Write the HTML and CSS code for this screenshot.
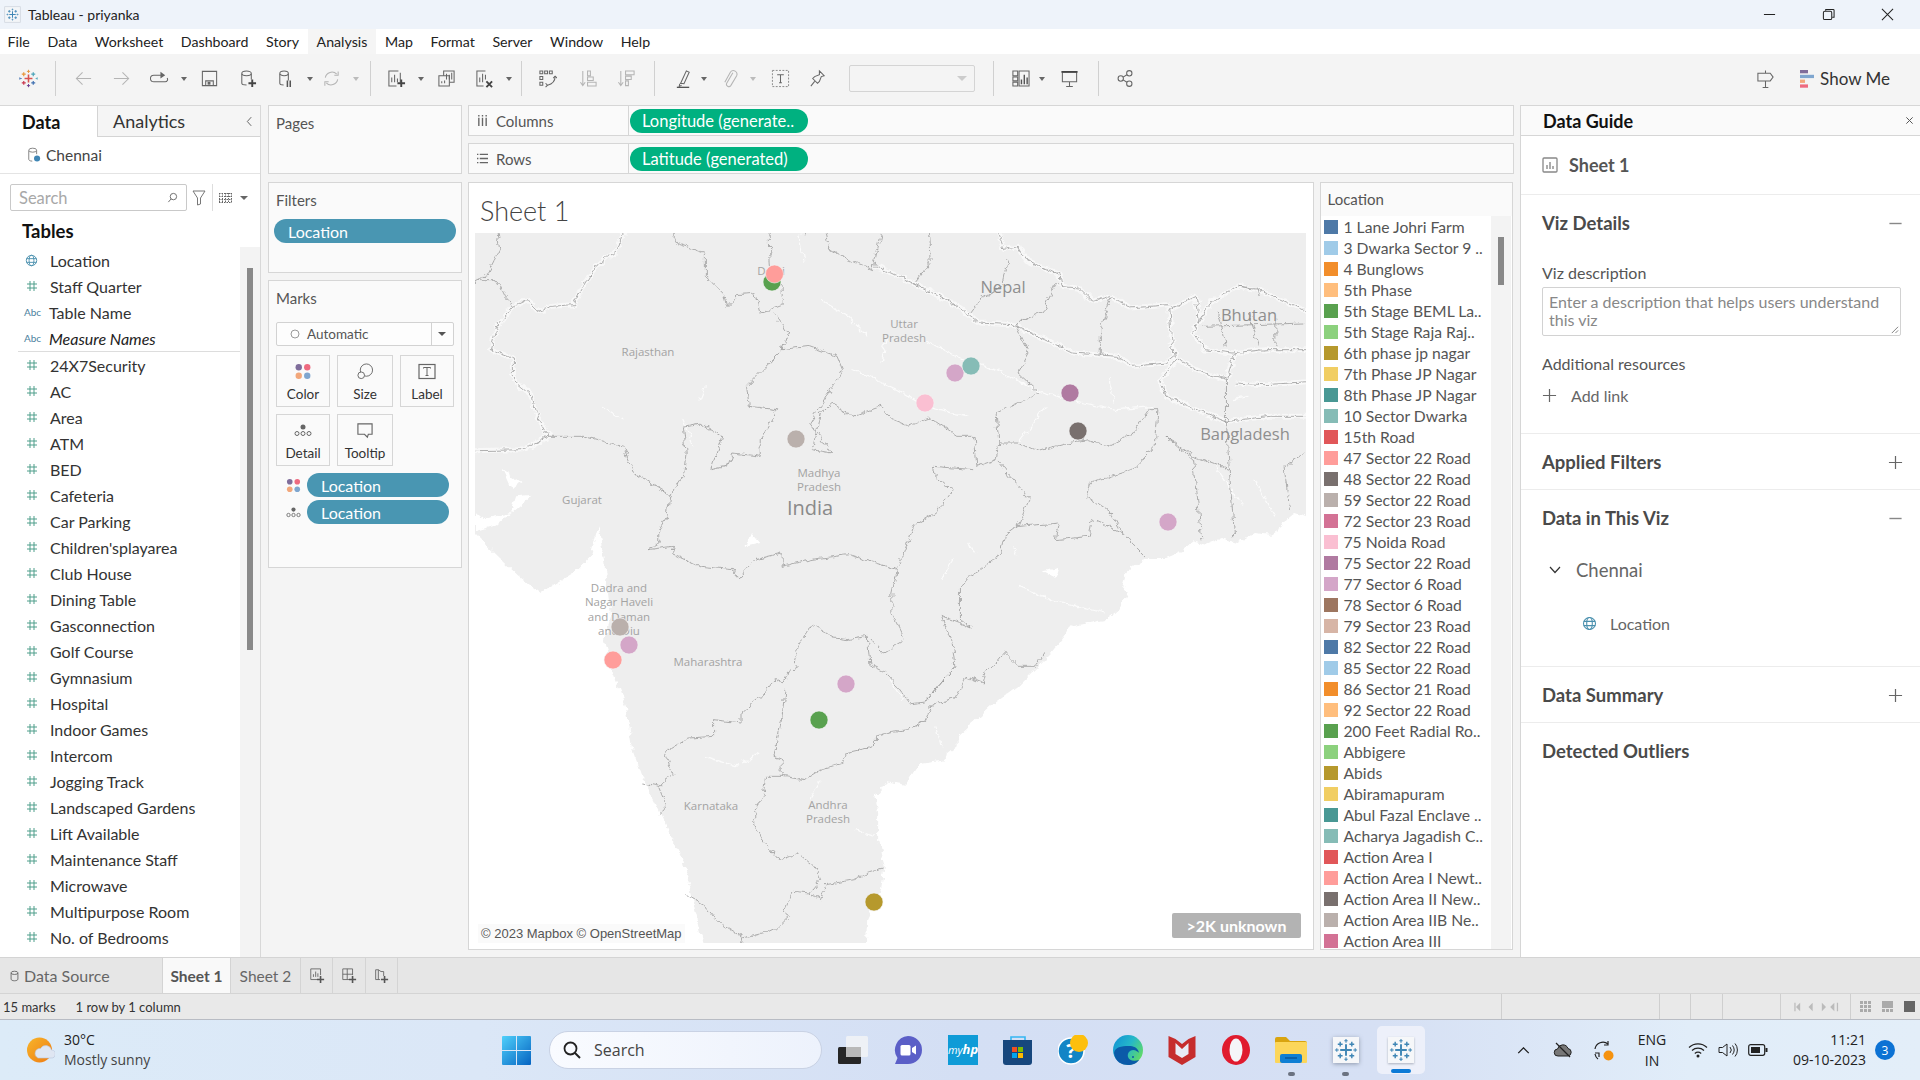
FILE: index.html
```html
<!DOCTYPE html>
<html lang="en">
<head>
<meta charset="utf-8">
<title>Tableau - priyanka</title>
<link rel="stylesheet" href="styles.css">
</head>
<body>
<svg class="sprites" aria-hidden="true">
  <symbol id="hash" viewBox="0 0 12 12"><path d="M4 1v10M8 1v10M1 4h10M1 8h10" fill="none" stroke="#4e9e8b" stroke-width="1"/></symbol>
  <symbol id="globe" viewBox="0 0 14 14"><g fill="none" stroke="#4a90ae" stroke-width="1"><circle cx="7" cy="7" r="5.6"/><ellipse cx="7" cy="7" rx="2.6" ry="5.6"/><path d="M1.6 5h10.8M1.6 9h10.8"/></g></symbol>
  <symbol id="tab" viewBox="0 0 24 24"><g fill="none" stroke="#3f86b5"><path d="M12 6v12M6 12h12" stroke-width="2"/><path d="M6 3.500v5M3.500 6h5M18 3.500v5M15.500 6h5M6 15.500v5M3.500 18h5M18 15.500v5M15.500 18h5" stroke-width="1.500"/><path d="M12 .5v4M10.300 2.500h3.400M12 19.500v4M10.300 21.500h3.400M2.500 10.300v3.400M.5 12h4M21.500 10.300v3.400M19.500 12h4" stroke-width="1.100"/></g></symbol>
  <symbol id="dots4" viewBox="0 0 16 16"><circle cx="4" cy="4" r="3" fill="#7f6d9b"/><circle cx="12" cy="4" r="3" fill="#ee6a80"/><circle cx="4" cy="12" r="3" fill="#f2a77b"/><circle cx="12" cy="12" r="3" fill="#7fa6cf"/></symbol>
  <symbol id="detail" viewBox="0 0 18 14"><circle cx="9" cy="3.500" r="2.500" fill="#666"/><g fill="none" stroke="#666"><circle cx="3" cy="10" r="2"/><circle cx="9" cy="10" r="2"/><circle cx="15" cy="10" r="2"/></g></symbol>
  <symbol id="plus" viewBox="0 0 16 16"><path d="M8 1v14M1 8h14" stroke="#666" stroke-width="1.300" fill="none"/></symbol>
  <symbol id="minus" viewBox="0 0 16 16"><path d="M1.500 8h13" stroke="#888" stroke-width="1.500" fill="none"/></symbol>
</svg>

<header class="titlebar">
  <svg class="title-icon" viewBox="0 0 24 24"><rect x="1" y="1" width="22" height="22" fill="#f3f5f8" stroke="#cdd3dc"/><use href="#tab" x="3" y="3" width="18" height="18"/></svg>
  <span class="title-text">Tableau - priyanka</span>
  <div class="win-ctrl">
    <svg viewBox="0 0 14 14"><path d="M1 7h12" stroke="#222" stroke-width="1.100"/></svg>
    <svg viewBox="0 0 14 14"><g fill="none" stroke="#222" stroke-width="1.100"><rect x="1.500" y="3.500" width="9" height="9" rx="1.500"/><path d="M4 3V1.500h8a1 1 0 0 1 1 1V10h-2"/></g></svg>
    <svg viewBox="0 0 14 14"><path d="M1 1l12 12M13 1L1 13" stroke="#222" stroke-width="1.100"/></svg>
  </div>
</header>

<nav class="menubar">
  <span class="menu">File</span><span class="menu">Data</span><span class="menu">Worksheet</span><span class="menu">Dashboard</span><span class="menu">Story</span><span class="menu hot">Analysis</span><span class="menu">Map</span><span class="menu">Format</span><span class="menu">Server</span><span class="menu">Window</span><span class="menu">Help</span>
</nav>

<div class="toolbar">
  <span class="btn"><svg viewBox="0 0 24 24"><g fill="none"><path d="M12 7v10M7 12h10" stroke="#d9534f" stroke-width="2"/><path d="M6 4v5M3.500 6.500h5" stroke="#e8973c" stroke-width="1.500"/><path d="M18 4v5M15.500 6.500h5" stroke="#4aa3b8" stroke-width="1.500"/><path d="M6 15v5M3.500 17.500h5" stroke="#c9384f" stroke-width="1.500"/><path d="M18 15v5M15.500 17.500h5" stroke="#3f6fb0" stroke-width="1.500"/><path d="M12 1v4M10 3h4" stroke="#e8973c" stroke-width="1.200"/><path d="M12 19v4M10 21h4" stroke="#6a3d8f" stroke-width="1.200"/><path d="M1 10.500v3M1 12h2.500" stroke="#3f6fb0" stroke-width="1"/><path d="M23 10.500v3M21 12h2" stroke="#4aa3b8" stroke-width="1"/></g></svg></span>
  <i class="sep"></i>
  <span class="btn off"><svg viewBox="0 0 20 20"><path d="M18 10H3M9 3.500L2.500 10 9 16.500" class="ln"/></svg></span>
  <span class="btn off"><svg viewBox="0 0 20 20"><path d="M2 10h15M11 3.500l6.500 6.500-6.500 6.500" class="ln"/></svg></span>
  <span class="btn"><svg viewBox="0 0 20 20"><path d="M13 6.500H4a2.500 2.500 0 0 0 0 7h12a2.500 2.500 0 0 0 2-4" class="ln"/><path d="M11 3l5 3.500-5 3.500z" fill="#666"/></svg></span>
  <span class="car"></span>
  <span class="btn"><svg viewBox="0 0 20 20"><path d="M2.500 2.500h15v15h-15z" class="ln"/><path d="M6 17.500v-5h8v5" class="ln"/><rect x="8" y="13.500" width="3" height="3" fill="#666"/></svg></span>
  <span class="btn"><svg viewBox="0 0 20 20"><path d="M4 5v10c0 1 1.500 1.800 5 1.800M14 5v6" class="ln"/><ellipse cx="9" cy="4.500" rx="5" ry="2.500" class="ln"/><path d="M15 11v8M11 15h8" stroke="#444" stroke-width="2"/></svg></span>
  <span class="btn"><svg viewBox="0 0 20 20"><path d="M4 5v10c0 1 1.500 1.800 4 1.800M13 5v7" class="ln"/><ellipse cx="8.500" cy="4.500" rx="4.500" ry="2.500" class="ln"/><path d="M12 12v7M15 12v7" stroke="#555" stroke-width="1.600"/></svg></span>
  <span class="car"></span>
  <span class="btn m off"><svg viewBox="0 0 20 20"><path d="M3.500 9a7 7 0 0 1 12-3.500M16.500 11a7 7 0 0 1-12 3.500" class="ln"/><path d="M13 6.500h4V2.500M7 13.500H3v4" class="ln"/></svg></span>
  <span class="car off ml-4"></span>
  <i class="sep"></i>
  <span class="btn ml-neg2"><svg viewBox="0 0 20 20"><path d="M12 2H2v16h8" class="ln"/><path d="M5 14V9M8 14V6M11 14V10M14 14V4" class="ln"/><path d="M15 11v8M11 15h8" stroke="#444" stroke-width="2"/></svg></span>
  <span class="car"></span>
  <span class="btn"><svg viewBox="0 0 20 20"><path d="M7 7V2h11v12h-5" class="ln"/><path d="M2 7h11v11H2z" class="ln"/><path d="M10 11V5M13 11V6M15.500 11V4M5 15v-2M8 15v-3" class="ln"/></svg></span>
  <span class="btn"><svg viewBox="0 0 20 20"><path d="M11 2H2v16h7" class="ln"/><path d="M5 14V9M8 14V5M11 11V6" class="ln"/><path d="M12 13l6 6M18 13l-6 6" stroke="#444" stroke-width="2"/></svg></span>
  <span class="car"></span>
  <i class="sep tight"></i>
  <span class="btn"><svg viewBox="0 0 20 20"><path d="M2 2h3v3H2zM7 2h3v3H7zM12 2h3v3h-3zM2 8h3v3H2zM2 14h3v3H2z" class="ln"/><path d="M18 8c0 5-3 8-8 9" class="ln"/><path d="M16 9.500l2-2 2 2M8 15l2 2-2 2" class="ln"/></svg></span>
  <span class="btn ml-3 off"><svg viewBox="0 0 20 20"><path d="M4 2v15M1.500 14L4 17.500 6.500 14M9 2h3v5H9zM9 8.500h6v3.500H9zM9 14h9v4H9z" class="ln"/></svg></span>
  <span class="btn off"><svg viewBox="0 0 20 20"><path d="M4 2v15M1.500 14L4 17.500 6.500 14M9 2h9v4H9zM9 7.500h6V11H9zM9 12.500h3v5H9z" class="ln"/></svg></span>
  <i class="sep mid"></i>
  <span class="btn n ml-6"><svg viewBox="0 0 20 20"><path d="M7 15L13 2l3 1.500-5.500 12zM6 15.500l-.5 3 2.500-1.500" class="ln"/><path d="M3 19.500h13" stroke="#555" stroke-width="1.800"/></svg></span>
  <span class="car ml-2"></span>
  <span class="btn m ml-5 off"><svg viewBox="0 0 20 20"><path d="M12.500 4L6 15a2.500 2.500 0 0 0 4.300 2.500L16.500 7a3.800 3.800 0 0 0-6.500-3.800L4 14" class="ln"/></svg></span>
  <span class="car off ml-2"></span>
  <span class="btn n ml-8"><svg viewBox="0 0 20 20"><rect x="1.500" y="1.500" width="17" height="17" fill="none" stroke="#888" stroke-dasharray="2 1.500"/><path d="M6.500 6h7M10 6v8.500M8.500 14.500h3" class="ln"/></svg></span>
  <span class="btn n ml-11"><svg viewBox="0 0 20 20"><path d="M12 2l5 5-3 1-2 5-2 2-5-5 2-2 5-2zM7 13l-4 5" class="ln"/></svg></span>
  <span class="combo"><span class="combo-caret"></span></span>
  <i class="sep combo-sep"></i>
  <span class="btn m ml-11"><svg viewBox="0 0 20 20"><path d="M2 2h5v5H2zM2 8.500h5v4H2zM2 14h5v4H2zM8.500 2H19v16H8.500z" class="ln"/><path d="M11 16v-5M14 16V6M17 16V9" stroke="#555" stroke-width="1.500"/></svg></span>
  <span class="car ml-1"></span>
  <span class="btn n ml-8"><svg viewBox="0 0 20 20"><path d="M2.500 3.500h15v10h-15zM10 13.500v5M6.500 18.500h7" class="ln"/><path d="M1.500 3h17" stroke="#444" stroke-width="1.800"/></svg></span>
  <i class="sep wide"></i>
  <span class="btn n ml-13"><svg viewBox="0 0 20 20"><g class="ln"><circle cx="14" cy="4.500" r="2.800"/><circle cx="5" cy="10" r="2.800"/><circle cx="14" cy="15.500" r="2.800"/><path d="M7.500 8.500l4-2.500M7.500 11.500l4 2.500"/></g></svg></span>
  <span class="tb-right">
    <svg class="sign" viewBox="0 0 20 20"><path d="M10 1v3M10 12v7M7 19h6M2 4h13l3 4-3 4H2z" class="ln"/></svg>
    <svg class="showme-ic" viewBox="0 0 14 18"><rect y="0" width="8" height="3.300" fill="#7f6d9b"/><rect y="4.800" width="14" height="3.300" fill="#7fa6cf"/><rect y="9.600" width="5" height="3.300" fill="#f2a77b"/><rect y="14.400" width="8" height="3.300" fill="#ee6a80"/></svg>
    <span class="showme">Show Me</span>
  </span>
</div>

<main class="main">
  <aside class="data-pane">
    <div class="pane-tabs">
      <span class="ptab active">Data</span>
      <span class="ptab rest">Analytics<svg class="collapse" viewBox="0 0 8 12"><path d="M6 1L1.500 6 6 11" fill="none" stroke="#555"/></svg></span>
    </div>
    <div class="source">
      <svg viewBox="0 0 16 18"><g fill="none" stroke="#777"><path d="M2 4v10c0 1 1.500 2 4 2M11 4v4"/><ellipse cx="6.500" cy="3.500" rx="4.500" ry="2.300"/></g><circle cx="11.500" cy="13" r="3.500" fill="#3f86b5"/></svg>
      <span>Chennai</span>
    </div>
    <div class="search-row">
      <div class="search"><span>Search</span><svg viewBox="0 0 12 12"><circle cx="7" cy="5" r="3.500" fill="none" stroke="#666"/><path d="M4.500 7.500L1.500 11" stroke="#666"/></svg></div>
      <svg class="filter-ic" viewBox="0 0 14 16"><path d="M1 1h12L8.500 8v6l-3 1V8z" fill="none" stroke="#777"/></svg>
      <i class="mini-sep"></i>
      <svg class="grid-ic" viewBox="0 0 13 10"><path d="M0 .5h13M0 3.500h13M0 6.500h13M0 9.500h13M.5 0v10M3.500 0v10M6.500 0v10M9.500 0v10M12.500 0v10" stroke="#666" stroke-dasharray="1.500 1" fill="none"/></svg>
      <span class="caret-dark"></span>
    </div>
    <h2 class="tables">Tables</h2>
    <div class="fields">
      <ul class="field-list">
        <li><svg class="gl" ><use href="#globe"/></svg><span>Location</span></li>
        <li><svg class="hs"><use href="#hash"/></svg><span>Staff Quarter</span></li>
        <li><em class="abc">Abc</em><span>Table Name</span></li>
        <li class="rule"><em class="abc">Abc</em><span class="it">Measure Names</span></li>
        <li><svg class="hs"><use href="#hash"/></svg><span>24X7Security</span></li>
        <li><svg class="hs"><use href="#hash"/></svg><span>AC</span></li>
        <li><svg class="hs"><use href="#hash"/></svg><span>Area</span></li>
        <li><svg class="hs"><use href="#hash"/></svg><span>ATM</span></li>
        <li><svg class="hs"><use href="#hash"/></svg><span>BED</span></li>
        <li><svg class="hs"><use href="#hash"/></svg><span>Cafeteria</span></li>
        <li><svg class="hs"><use href="#hash"/></svg><span>Car Parking</span></li>
        <li><svg class="hs"><use href="#hash"/></svg><span>Children'splayarea</span></li>
        <li><svg class="hs"><use href="#hash"/></svg><span>Club House</span></li>
        <li><svg class="hs"><use href="#hash"/></svg><span>Dining Table</span></li>
        <li><svg class="hs"><use href="#hash"/></svg><span>Gasconnection</span></li>
        <li><svg class="hs"><use href="#hash"/></svg><span>Golf Course</span></li>
        <li><svg class="hs"><use href="#hash"/></svg><span>Gymnasium</span></li>
        <li><svg class="hs"><use href="#hash"/></svg><span>Hospital</span></li>
        <li><svg class="hs"><use href="#hash"/></svg><span>Indoor Games</span></li>
        <li><svg class="hs"><use href="#hash"/></svg><span>Intercom</span></li>
        <li><svg class="hs"><use href="#hash"/></svg><span>Jogging Track</span></li>
        <li><svg class="hs"><use href="#hash"/></svg><span>Landscaped Gardens</span></li>
        <li><svg class="hs"><use href="#hash"/></svg><span>Lift Available</span></li>
        <li><svg class="hs"><use href="#hash"/></svg><span>Maintenance Staff</span></li>
        <li><svg class="hs"><use href="#hash"/></svg><span>Microwave</span></li>
        <li><svg class="hs"><use href="#hash"/></svg><span>Multipurpose Room</span></li>
        <li><svg class="hs"><use href="#hash"/></svg><span>No. of Bedrooms</span></li>
      </ul>
      <div class="track data-track"><div class="thumb data-thumb"></div></div>
    </div>
  </aside>

  <section class="cards">
    <div class="card pages"><h3>Pages</h3></div>
    <div class="card filters"><h3>Filters</h3><div class="pill blue">Location</div></div>
    <div class="card marks">
      <h3>Marks</h3>
      <div class="marktype"><svg viewBox="0 0 10 10"><circle cx="5" cy="5" r="4" fill="none" stroke="#999"/></svg><span>Automatic</span><b></b></div>
      <div class="markgrid">
        <div class="mbtn"><svg><use href="#dots4"/></svg><span>Color</span></div>
        <div class="mbtn"><svg viewBox="0 0 18 18"><g fill="none" stroke="#666"><circle cx="10.500" cy="7.500" r="6.500"/><circle cx="5" cy="13" r="3.500" fill="#fafafa"/></g></svg><span>Size</span></div>
        <div class="mbtn"><svg viewBox="0 0 18 16"><rect x="1" y="1" width="16" height="14" fill="none" stroke="#666" stroke-width="1.200"/><path d="M5.500 5V4h7v1M9 4v8M7.500 12h3" fill="none" stroke="#666"/></svg><span>Label</span></div>
        <div class="mbtn"><svg><use href="#detail"/></svg><span>Detail</span></div>
        <div class="mbtn"><svg viewBox="0 0 18 18"><path d="M1.500 2h15v11h-4l-1 3-3-3h-7z" fill="none" stroke="#666" stroke-width="1.200"/></svg><span>Tooltip</span></div>
      </div>
      <div class="encode"><svg class="enc-ic"><use href="#dots4"/></svg><div class="pill blue enc">Location</div></div>
      <div class="encode"><svg class="enc-ic"><use href="#detail"/></svg><div class="pill blue enc">Location</div></div>
    </div>
  </section>

  <section class="center">
    <div class="shelf">
      <div class="shelf-label"><svg viewBox="0 0 12 12"><path d="M2 3v9M6 3v9M10 3v9M2 0v1.500M6 0v1.500M10 0v1.500" stroke="#666" stroke-width="1.500"/></svg><span>Columns</span></div>
      <div class="pill green">Longitude (generate..</div>
    </div>
    <div class="shelf">
      <div class="shelf-label"><svg viewBox="0 0 12 12"><path d="M3 1.500h9M3 6h9M3 10.500h9M0 1.500h1.500M0 6h1.500M0 10.500h1.500" stroke="#666" stroke-width="1.500"/></svg><span>Rows</span></div>
      <div class="pill green">Latitude (generated)</div>
    </div>
    <div class="viz-row">
      <div class="sheet">
        <h1 class="sheet-title">Sheet 1</h1>
        <div class="map">
          <svg class="map-base" viewBox="10 160 1515 2130" preserveAspectRatio="none">
            <defs><filter id="rough" filterUnits="userSpaceOnUse" x="-100" y="60" width="1750" height="2350"><feTurbulence type="fractalNoise" baseFrequency="0.07 0.045" numOctaves="4" seed="7" result="n"/><feDisplacementMap in="SourceGraphic" in2="n" scale="16" xChannelSelector="R" yChannelSelector="G"/></filter></defs>
            <g filter="url(#rough)">
            <path class="land" d="M-60 90H1600V1010L1525 1010L1505 1000L1490 1020L1480 1045L1460 1065L1430 1060L1400 1090L1370 1075L1340 1095L1320 1085L1300 1115L1270 1135L1235 1135L1200 1170L1190 1220L1200 1240L1185 1290L1160 1320L1100 1340L1060 1420L1000 1520L950 1580L890 1670L890 1700L860 1740L820 1750L795 1815L760 1805L740 1850L745 1900L745 1980L757 2060L750 2130L725 2220L720 2380L440 2380L410 2180L390 2040L350 1910L320 1810L300 1720L285 1580L260 1470L245 1380L258 1310L250 1210L245 1140L235 1040L220 1130L190 1180L130 1240L90 1190L40 1110L10 1060L-60 1060Z"/>
            <path class="sea" d="M10 1055L50 1035L90 980L115 945L85 950L75 1000L30 1015L10 1000ZM60 870L95 910L75 925ZM1095 1340L1080 1390L1110 1350ZM515 1060L530 1090L505 1100ZM1045 1175L1075 1165L1070 1195Z"/>
            <g class="halo">
              <path d="M290 100L270 210L225 270L200 340L190 375L150 380L125 395L105 360L80 380L50 440L38 510L80 535L80 600L115 650L120 700L145 770L120 790L100 810L-40 815"/>
              <path d="M740 260L770 280L820 320L880 370L910 405L930 430L990 435L1050 480L1100 520L1180 530L1210 560L1270 550L1285 530L1280 480L1275 390L1325 350L1330 420L1320 460L1340 510L1390 520L1450 510L1580 510"/>
              <path d="M950 100L975 210L1000 200L1015 240L1075 285L1078 320L1110 325L1135 365L1170 350L1205 385L1275 375"/>
              <path d="M1325 440L1350 370L1400 320L1440 330L1520 390L1580 440"/>
              <path d="M1290 540L1340 580L1380 600L1395 520M1290 540L1260 600L1270 650L1340 700L1380 725L1460 710L1580 710M1395 610L1450 615L1580 600"/>
            </g>
            <g class="river">
              <path d="M640 360L690 410L725 470M830 480L890 535L960 570L1040 635L1120 670L1180 690L1250 680M760 480L750 550M700 570L780 630L830 680L910 710M430 620L420 660M240 680L280 720M1050 680L1000 790M1165 590L1175 670M600 165L610 250M390 715L410 800"/>
              <path d="M1390 660L1420 650M1430 900L1470 1010M1360 860L1410 980M910 1090L925 1120M880 1140L860 1200M990 1100L1000 1130M1000 1220L1060 1260L1160 1300"/>
              <path d="M765 1500L790 1560M640 1800L620 1860M850 1640L860 1700M700 1950L740 1970M430 1730L490 1760M495 1750L530 1720"/>
            </g>
            <g class="bd">
              <path d="M290 100L270 210L225 270L200 340L190 375L150 380L125 395L105 360L80 380L50 440L38 510L80 535L80 600L115 650L120 700L145 770L120 790L100 810L-40 815"/>
              <path d="M45 100L55 210L30 290L-20 330M20 300L50 300L65 350L80 380"/>
              <path d="M640 100L655 205L690 240L735 270L760 100M810 310L840 250L835 100M600 100L610 170"/>
              <path d="M740 260L770 280L820 320L880 370L910 405L930 430L990 435L1050 480L1100 520L1180 530L1210 560L1270 550L1285 530L1280 480L1275 390L1325 350L1330 420L1320 460L1340 510L1390 520L1450 510L1580 510"/>
              <path d="M950 100L975 210L1000 200L1015 240L1075 285L1078 320L1110 325L1135 365L1170 350L1205 385L1275 375M910 405L930 360L970 320L980 240M1070 310L1045 395L1000 430M1170 350L1150 450L1150 530"/>
              <path d="M1325 440L1350 370L1400 320L1440 330L1520 390L1580 440M1365 395L1380 500M1420 400L1440 500M1470 420L1470 500M1340 440L1520 430M1400 320L1435 325L1440 350"/>
              <path d="M545 100L548 250L550 300L570 320L570 375L530 400L520 340L490 345L470 380L465 345L430 290L430 220L375 190L375 100"/>
              <path d="M555 400L580 460L570 510L620 500L670 530L680 570L655 640L640 680L620 730L660 820L625 810L640 700L660 670L700 710L750 680L770 720L800 740L840 715L890 770L920 770L925 860L960 840L965 790L960 700L1040 640L1000 580L1020 520L995 430"/>
              <path d="M570 510L505 620L510 680L560 690L530 780L530 830L480 820L470 860L440 870L460 770L420 730L390 740L395 820L390 890L365 950L360 1010L345 1050L345 1090"/>
              <path d="M145 770L210 770L280 800L300 880L370 950"/>
              <path d="M345 1090L325 1110L370 1100L375 1125L420 1160L480 1170L490 1195L520 1140L570 1120L570 1160L620 1140L690 1125L780 1170L770 1240L770 1300L795 1380L755 1420L730 1375"/>
              <path d="M780 1170L810 1040L850 1000L880 930L845 880L845 860L920 870"/>
              <path d="M960 840L1020 960L1000 1040L975 1070L965 1130L915 1190L895 1220L895 1320L915 1345L860 1310L880 1390L885 1460L830 1570"/>
              <path d="M1000 1040L1075 1030L1070 1080L1130 1070L1135 1020L1190 1060L1235 1135"/>
              <path d="M965 790L1000 790L1035 815L1090 790L1130 780L1165 800L1210 760L1240 690L1255 690L1250 800L1210 870L1130 910L1125 950L1170 1000L1190 1060"/>
              <path d="M1290 540L1260 600L1270 650L1340 700L1380 725L1460 710L1580 710M1380 725L1385 870L1320 830L1270 770L1320 840L1335 1080M1290 540L1340 580L1380 600L1395 520M1395 610L1450 615L1580 600M1380 600L1380 725M1385 870L1395 1070M1525 820L1485 860L1495 990"/>
              <path d="M625 1335L665 1375L690 1380L725 1370L730 1455L755 1475L780 1520L805 1575L830 1570L885 1460"/>
              <path d="M625 1335L600 1400L590 1440L600 1460L580 1480L570 1510L555 1500L530 1550L495 1600L495 1630L445 1620L445 1670L400 1675L355 1720L370 1780L345 1820L315 1810"/>
              <path d="M575 1530L570 1610L555 1730L570 1740L570 1790L540 1790L535 1850L520 1890L520 1940L535 1980L565 2040L600 2020L630 2060L640 2100L620 2140L590 2135L575 2190L585 2210L560 2250L500 2275L485 2380"/>
              <path d="M345 1820L355 1860L355 1890L345 1905M395 2145L430 2180L455 2230L500 2275"/>
              <path d="M620 2140L640 2160L650 2115L700 2100L725 2080L755 2065"/>
              <path d="M570 1790L610 1800L640 1770L680 1750L685 1720L740 1700L740 1670L770 1655L800 1650L830 1625L845 1570"/>
              <path d="M975 1420L960 1450L940 1475L935 1510L905 1490L885 1555L850 1570M975 1420L1000 1460L1030 1460L1050 1420"/>
            </g>
            </g>
          </svg>
          <svg class="map-over" viewBox="0 0 831 710">
            <g class="lbl">
              <text x="173" y="123">Rajasthan</text>
              <text x="296" y="42">Delhi</text>
              <text class="big" x="528" y="60">Nepal</text>
              <text x="429" y="95">Uttar</text>
              <text x="429" y="109">Pradesh</text>
              <text class="big" x="774" y="88">Bhutan</text>
              <text class="big" x="770" y="207">Bangladesh</text>
              <text x="344" y="244">Madhya</text>
              <text x="344" y="258">Pradesh</text>
              <text class="huge" x="335" y="282">India</text>
              <text x="107" y="271">Gujarat</text>
              <text x="144" y="359">Dadra and</text>
              <text x="144" y="373">Nagar Haveli</text>
              <text x="144" y="388">and Daman</text>
              <text x="144" y="402">and Diu</text>
              <text x="233" y="433">Maharashtra</text>
              <text x="236" y="577">Karnataka</text>
              <text x="353" y="576">Andhra</text>
              <text x="353" y="590">Pradesh</text>
            </g>
            <g class="mk">
              <circle cx="297" cy="49" r="9" fill="#59a14f"/>
              <circle cx="299.500" cy="41" r="9" fill="#ff9d9a"/>
              <circle cx="480" cy="140" r="9" fill="#d4a6c8"/>
              <circle cx="496" cy="133" r="9" fill="#86bcb6"/>
              <circle cx="450" cy="170" r="9" fill="#fabfd2"/>
              <circle cx="595" cy="160" r="9" fill="#b07aa1"/>
              <circle cx="603" cy="198" r="9" fill="#79706e"/>
              <circle cx="321" cy="206" r="9" fill="#bab0ac"/>
              <circle cx="693" cy="289" r="9" fill="#d4a6c8"/>
              <circle cx="154" cy="412" r="9" fill="#d4a6c8"/>
              <circle cx="145" cy="394" r="9" fill="#bab0ac"/>
              <circle cx="138" cy="427" r="9" fill="#ff9d9a"/>
              <circle cx="371" cy="451" r="9" fill="#d4a6c8"/>
              <circle cx="344" cy="487" r="9" fill="#59a14f"/>
              <circle cx="399" cy="669" r="9" fill="#b6992d"/>
            </g>
          </svg>
          <span class="attrib">© 2023 Mapbox © OpenStreetMap</span>
          <span class="unknown">&gt;2K unknown</span>
        </div>
      </div>
      <aside class="legend">
        <h3>Location</h3>
        <div class="legend-body">
          <ul class="legend-list">
            <li><i class="c1"></i>1 Lane Johri Farm</li>
            <li><i class="c2"></i>3 Dwarka Sector 9 ..</li>
            <li><i class="c3"></i>4 Bunglows</li>
            <li><i class="c4"></i>5th Phase</li>
            <li><i class="c5"></i>5th Stage BEML La..</li>
            <li><i class="c6"></i>5th Stage Raja Raj..</li>
            <li><i class="c7"></i>6th phase jp nagar</li>
            <li><i class="c8"></i>7th Phase JP Nagar</li>
            <li><i class="c9"></i>8th Phase JP Nagar</li>
            <li><i class="c10"></i>10 Sector Dwarka</li>
            <li><i class="c11"></i>15th Road</li>
            <li><i class="c12"></i>47 Sector 22 Road</li>
            <li><i class="c13"></i>48 Sector 22 Road</li>
            <li><i class="c14"></i>59 Sector 22 Road</li>
            <li><i class="c15"></i>72 Sector 23 Road</li>
            <li><i class="c16"></i>75 Noida Road</li>
            <li><i class="c17"></i>75 Sector 22 Road</li>
            <li><i class="c18"></i>77 Sector 6 Road</li>
            <li><i class="c19"></i>78 Sector 6 Road</li>
            <li><i class="c20"></i>79 Sector 23 Road</li>
            <li><i class="c1"></i>82 Sector 22 Road</li>
            <li><i class="c2"></i>85 Sector 22 Road</li>
            <li><i class="c3"></i>86 Sector 21 Road</li>
            <li><i class="c4"></i>92 Sector 22 Road</li>
            <li><i class="c5"></i>200 Feet Radial Ro..</li>
            <li><i class="c6"></i>Abbigere</li>
            <li><i class="c7"></i>Abids</li>
            <li><i class="c8"></i>Abiramapuram</li>
            <li><i class="c9"></i>Abul Fazal Enclave ..</li>
            <li><i class="c10"></i>Acharya Jagadish C..</li>
            <li><i class="c11"></i>Action Area I</li>
            <li><i class="c12"></i>Action Area I Newt..</li>
            <li><i class="c13"></i>Action Area II New..</li>
            <li><i class="c14"></i>Action Area IIB Ne..</li>
            <li><i class="c15"></i>Action Area III</li>
          </ul>
          <div class="track legend-track"><div class="thumb legend-thumb"></div></div>
        </div>
      </aside>
    </div>
  </section>

  <aside class="guide">
    <div class="guide-head"><span>Data Guide</span><svg viewBox="0 0 10 10"><path d="M1.500 1.500l7 7M8.500 1.500l-7 7" stroke="#555" stroke-width="1.100"/></svg></div>
    <div class="guide-sheet"><svg viewBox="0 0 16 16"><rect x="1" y="1" width="14" height="14" rx="1" fill="none" stroke="#888" stroke-width="1.300"/><path d="M5 12V8M8 12V5M11 12V9" stroke="#777" stroke-width="1.200"/></svg><span>Sheet 1</span></div>
    <section class="gsec viz">
      <div class="ghead"><span>Viz Details</span><svg><use href="#minus"/></svg></div>
      <label class="glabel vd">Viz description</label>
      <div class="gtext">Enter a description that helps users understand this viz<svg viewBox="0 0 10 10"><path d="M9 2L2 9M9 6L6 9" stroke="#777"/></svg></div>
      <label class="glabel ar">Additional resources</label>
      <div class="addlink"><svg><use href="#plus"/></svg><span>Add link</span></div>
    </section>
    <section class="gsec short"><div class="ghead"><span>Applied Filters</span><svg><use href="#plus"/></svg></div></section>
    <section class="gsec dataviz">
      <div class="ghead"><span>Data in This Viz</span><svg><use href="#minus"/></svg></div>
      <div class="dsrc"><svg viewBox="0 0 12 8"><path d="M1 1l5 5.500L11 1" fill="none" stroke="#333" stroke-width="1.200"/></svg><span>Chennai</span></div>
      <div class="dfield"><svg><use href="#globe"/></svg><span>Location</span></div>
    </section>
    <section class="gsec short"><div class="ghead"><span>Data Summary</span><svg><use href="#plus"/></svg></div></section>
    <section class="gsec last"><div class="ghead"><span>Detected Outliers</span></div></section>
  </aside>
</main>

<div class="tabbar">
  <div class="tab ds"><svg viewBox="0 0 10 12"><g fill="none" stroke="#666"><ellipse cx="5" cy="2.500" rx="3.800" ry="1.800"/><path d="M1.200 2.500v7c0 1 1.700 1.800 3.800 1.800s3.800-.8 3.800-1.800v-7"/></g></svg><span>Data Source</span></div>
  <div class="tab cur">Sheet 1</div>
  <div class="tab s2">Sheet 2</div>
  <div class="tab ict"><svg viewBox="0 0 18 18"><path d="M9 13H2V1h11v7" fill="none" stroke="#666"/><path d="M5 10V7M7.500 10V4M10 10V6" stroke="#666"/><path d="M13 9v8M9 13h8" stroke="#555" stroke-width="1.800"/></svg></div>
  <div class="tab ict"><svg viewBox="0 0 18 18"><path d="M9 13H2V1h11v7M2 7h11M7 1v12" fill="none" stroke="#666"/><path d="M13 9v8M9 13h8" stroke="#555" stroke-width="1.800"/></svg></div>
  <div class="tab ict"><svg viewBox="0 0 18 18"><path d="M3 2h3l3 2h3v5M3 2v11M3 13h5M6 2v11" fill="none" stroke="#666"/><path d="M13 9v8M9 13h8" stroke="#555" stroke-width="1.800"/></svg></div>
</div>

<div class="statusbar">
  <span class="st a">15 marks</span>
  <span class="st b">1 row by 1 column</span>
  <div class="st-cells">
    <i class="cell c-a"></i><i class="cell c-b"></i><i class="cell c-c"></i><i class="cell c-d"></i>
    <div class="st-nav"><svg viewBox="0 0 54 12"><g fill="#bbb"><path d="M1 1h1.500v10H1zM8 1v10L3 6zM23 1v10l-5-5zM34 1v10l5-5zM49 1v10l-5-5zM52 1h1.500v10H52z"/></g></svg></div>
    <div class="st-view">
      <svg viewBox="0 0 11 11"><path d="M0 0h3v3H0zM4 0h3v3H4zM8 0h3v3H8zM0 4h3v3H0zM4 4h3v3H4zM8 4h3v3H8zM0 8h3v3H0zM4 8h3v3H4zM8 8h3v3H8z" fill="#aaa"/></svg>
      <svg viewBox="0 0 11 11"><path d="M0 0h11v7H0zM0 8h3v3H0zM4 8h3v3H4zM8 8h3v3H8z" fill="#aaa"/></svg>
      <svg viewBox="0 0 11 11"><path d="M0 0h11v11H0z" fill="#666"/></svg>
    </div>
  </div>
</div>

<footer class="taskbar">
  <div class="weather">
    <svg viewBox="0 0 28 26"><defs><linearGradient id="sun" x1="0" y1="0" x2="1" y2="1"><stop offset="0" stop-color="#f7b52a"/><stop offset="1" stop-color="#ef7b12"/></linearGradient></defs><circle cx="12.500" cy="13" r="12.500" fill="url(#sun)"/><path d="M11 21h13a4 4 0 0 0 .5-8 6 6 0 0 0-11-1.500A5 5 0 0 0 11 21z" fill="#dfe6f2" stroke="#b8c6dc" stroke-width=".6"/></svg>
    <div class="w-text"><div>30°C</div><div class="w2">Mostly sunny</div></div>
  </div>
  <svg class="win" viewBox="0 0 29 29"><defs><linearGradient id="wn" x1="0" y1="0" x2="1" y2="1"><stop offset="0" stop-color="#4fd0fb"/><stop offset="1" stop-color="#0563c1"/></linearGradient></defs><path d="M0 1a1 1 0 0 1 1-1h13v14H0zM15 0h13a1 1 0 0 1 1 1v13H15zM0 15h14v14H1a1 1 0 0 1-1-1zM15 15h14v13a1 1 0 0 1-1 1H15z" fill="url(#wn)"/></svg>
  <div class="tsearch"><svg viewBox="0 0 18 18"><circle cx="7.500" cy="7.500" r="6" fill="none" stroke="#222" stroke-width="1.800"/><path d="M12 12l5 5" stroke="#222" stroke-width="2"/></svg><span>Search</span></div>
  <div class="apps">
    <svg viewBox="0 0 30 28"><rect x="0" y="11" width="23" height="17" rx="1.500" fill="#262626"/><rect x="8" y="0" width="22" height="21" rx="1.500" fill="#f2f3f6" fill-opacity=".85"/><rect x="8" y="11" width="15" height="10" fill="#b9b9b9"/></svg>
    <svg viewBox="0 0 30 28"><path d="M15 0a14 14 0 0 1 0 28H2l2.500-6A14 14 0 0 1 15 0z" fill="#5b5fc7"/><rect x="7.500" y="9" width="10" height="10.500" rx="1.500" fill="#fff"/><path d="M19 12l4-2.500v9L19 16z" fill="#fff"/></svg>
    <svg viewBox="0 0 30 30"><rect width="30" height="30" fill="#0f9bd7"/><text class="myhp" x="15" y="19">my<tspan class="hp">hp</tspan></text></svg>
    <svg viewBox="0 0 30 30"><path d="M8 5V2h14v3" fill="none" stroke="#35b6f2" stroke-width="1.600"/><path d="M0 5h29v22a3 3 0 0 1-3 3H3a3 3 0 0 1-3-3z" fill="#17477d"/><rect x="9" y="12" width="5" height="5" fill="#f25022"/><rect x="15" y="12" width="5" height="5" fill="#7fba00"/><rect x="9" y="18" width="5" height="5" fill="#00a4ef"/><rect x="15" y="18" width="5" height="5" fill="#ffb900"/></svg>
    <svg viewBox="0 0 30 30"><circle cx="13" cy="16" r="13" fill="#1285c6" stroke="#fff" stroke-width="1.500"/><text class="helpq" x="13" y="23">?</text><circle cx="21" cy="8" r="9" fill="#fdbf0d"/></svg>
    <svg viewBox="0 0 30 30"><defs><linearGradient id="ed" x1="0" y1="0" x2="1" y2=".6"><stop offset="0" stop-color="#0f8fd6"/><stop offset=".55" stop-color="#25b7c9"/><stop offset="1" stop-color="#5fd96a"/></linearGradient></defs><circle cx="15" cy="15" r="15" fill="url(#ed)"/><path d="M1 18C2 27 9 30 15 30c5 0 9-2 11-5-6 2-10 0-11-3-1-4 2-7 5-7 3 0 5 2 6 3-1-6-6-7-10-7C8 11 2 12 1 18z" fill="#0b5aa8"/><circle cx="20" cy="22" r="1" fill="#0b5aa8"/></svg>
    <svg class="mcafee" viewBox="0 0 27 30"><path d="M0 1l7 3 6.500 5L20 4l7-3v21l-13.500 8L0 22z" fill="#c62d2d"/><path d="M7 8l6.500 6L20 8v11l-6.500 4L7 19z" fill="#e8ecf6"/></svg>
    <svg viewBox="0 0 30 30"><ellipse cx="15" cy="15" rx="14" ry="15" fill="#e01b2e"/><ellipse cx="15" cy="15" rx="6.500" ry="11.500" fill="#f5f5f8"/></svg>
    <span class="app-files"><svg viewBox="0 0 32 26"><path d="M0 2a2 2 0 0 1 2-2h9l4 4h15a2 2 0 0 1 2 2v4H0z" fill="#d9a40f"/><rect y="5" width="32" height="21" rx="1" fill="#fcd65a"/><rect x="5" y="17" width="22" height="9" rx="2" fill="#0f7fd4"/><path d="M10 21h12" stroke="#074f93" stroke-width="1.300"/></svg></span>
    <span class="app-open"><svg viewBox="0 0 28 28"><rect width="28" height="28" fill="#f6f7f9"/><use href="#tab" x="1.500" y="1.500" width="25" height="25"/></svg></span>
    <span class="app-active"><svg viewBox="0 0 28 28"><rect width="28" height="28" fill="#f6f7f9"/><use href="#tab" x="1.500" y="1.500" width="25" height="25"/></svg></span>
  </div>
  <div class="tray">
    <svg class="t-chev" viewBox="0 0 14 8"><path d="M1 7l6-6 6 6" fill="none" stroke="#1d1d1d" stroke-width="1.500"/></svg>
    <svg class="t-cloud" viewBox="0 0 20 16"><path d="M5 14a3.500 3.500 0 0 1-.5-7 5.500 5.500 0 0 1 10.500-.5A3.800 3.800 0 0 1 15 14z" fill="#777" stroke="#222"/><path d="M3 1l14 14" stroke="#222" stroke-width="1.300"/></svg>
    <svg class="t-sync" viewBox="0 0 21 21"><path d="M2 9a8 8 0 0 1 13-5M5 19a8 8 0 0 1-3-5" fill="none" stroke="#222" stroke-width="1.200"/><path d="M15 1v4h-4M2 13h4v4" fill="none" stroke="#222" stroke-width="1.200"/><circle cx="15.500" cy="15.500" r="5" fill="#f5920f"/></svg>
    <div class="lang"><div>ENG</div><div>IN</div></div>
    <svg class="t-wifi" viewBox="0 0 20 16"><g fill="none" stroke="#222" stroke-width="1.200"><path d="M1 5.500a13 13 0 0 1 18 0M4 8.500a9 9 0 0 1 12 0M6.800 11.500a5 5 0 0 1 6.400 0"/></g><circle cx="10" cy="14" r="1.500" fill="#222"/></svg>
    <svg class="t-vol" viewBox="0 0 20 16"><path d="M1 5.500h3.500L9 2v12l-4.500-3.500H1z" fill="none" stroke="#222"/><path d="M12 5a4.500 4.500 0 0 1 0 6M14.500 3.500a7.500 7.500 0 0 1 0 9M17 1.500a10 10 0 0 1 0 13" fill="none" stroke="#222"/></svg>
    <svg class="t-bat" viewBox="0 0 20 12"><rect x=".7" y=".7" width="16" height="10.600" rx="2" fill="none" stroke="#222" stroke-width="1.200"/><rect x="3" y="3" width="9" height="6" fill="#222"/><rect x="17.500" y="4" width="2" height="4" fill="#222"/></svg>
    <div class="clock"><div>11:21</div><div>09-10-2023</div></div>
    <span class="notif">3</span>
  </div>
</footer>
</body>
</html>
```

FILE: styles.css
```css
*{box-sizing:border-box}
html,body{margin:0;padding:0}
body{width:1920px;height:1080px;overflow:hidden;display:flex;flex-direction:column;background:#f4f4f4;font-family:Lato,"Open Sans",sans-serif;color:#333;font-size:15px}
h1,h2,h3,ul{margin:0;padding:0;list-style:none;font-weight:400}
svg{display:block;flex:none}
.sprites{display:none}

.titlebar{height:29px;background:#eef3fa;display:flex;align-items:center;padding-left:4px;flex:none}
.title-icon{width:17px;height:17px}
.title-text{margin-left:7px;font-size:14px;color:#222}
.win-ctrl{margin-left:auto;display:flex;gap:46px;padding-right:26px}
.win-ctrl svg{width:13px;height:13px}

.menubar{height:25px;background:#fff;display:flex;align-items:stretch;flex:none;font-size:14.200px;color:#222}
.menu{display:flex;align-items:center;padding:0 9px 0 7.500px}
.menu+.menu{padding:0 8.800px}
.hot{background:#f5f5f5}

.toolbar{height:51px;background:#f4f4f4;display:flex;align-items:center;padding:0 0 2px 9px;flex:none}
.btn{width:38px;display:flex;justify-content:center}
.btn svg{width:19px;height:19px}
.btn.m{width:30px}
.btn.n{width:26px}
.ln{fill:none;stroke:#666;stroke-width:1.100}
.off .ln{stroke:#b4b4b4}
.sep{width:1px;height:35px;background:#d0d0d0;margin:0 8px;flex:none}
.sep.tight{margin:0 6px}
.sep.mid{margin:0 9px 0 9px}
.sep.combo-sep{margin:0 0 0 18px}
.sep.wide{margin:0 0 0 16px}
.car{width:12px;height:12px;flex:none}
.car::after{content:"";display:block;margin:4px auto 0;width:0;height:0;border:3.500px solid transparent;border-top:4px solid #666;border-bottom:0}
.car.off::after{border-top-color:#bbb}
.ml-1{margin-left:1px}.ml-2{margin-left:2px}.ml-3{margin-left:3px}.ml-4{margin-left:4px}.ml-5{margin-left:5px}.ml-6{margin-left:6px}.ml-8{margin-left:8px}.ml-11{margin-left:11px}.ml-13{margin-left:13px}.ml-neg2{margin-left:-2px}
.combo{width:126px;height:27px;margin-left:19px;background:#f4f4f4;border:1px solid #d4d4d4;border-radius:2px;display:flex;align-items:center;justify-content:flex-end;padding-right:7px;flex:none}
.combo-caret{width:0;height:0;border:5px solid transparent;border-top:5px solid #ccc;border-bottom:0}
.tb-right{margin-left:auto;display:flex;align-items:center;padding-right:30px}
.sign{width:19px;height:20px}
.showme-ic{width:14px;height:18px;margin-left:25px}
.showme{margin-left:6px;font-size:17px;color:#333}

.main{height:852px;display:flex;flex:none;background:#f4f4f4}
.data-pane{width:261px;background:#fff;border-right:1px solid #d8d8d8;display:flex;flex-direction:column;overflow:hidden;flex:none}
.pane-tabs{height:32px;display:flex;flex:none;border-top:1px solid #d8d8d8}
.ptab{display:flex;align-items:center}
.ptab.active{width:98px;padding-left:22px;font-weight:700;font-size:18px;color:#111;border-right:1px solid #d4d4d4}
.ptab.rest{flex:1;padding-left:15px;font-size:18px;background:#f5f5f5;border-bottom:1px solid #d4d4d4;color:#333}
.collapse{width:7px;height:11px;margin-left:auto;margin-right:7px}
.source{height:37px;display:flex;align-items:center;padding-left:27px;border-bottom:1px solid #e4e4e4;flex:none;color:#444}
.source svg{width:14px;height:16px}
.source span{margin-left:5px;font-size:15.500px}
.search-row{height:37px;display:flex;align-items:center;padding:10px 0 0 10px;flex:none}
.search{width:177px;height:27px;border:1px solid #c9c9c9;border-radius:2px;display:flex;align-items:center;justify-content:space-between;padding:0 8px;color:#a8a8a8;font-size:16.500px}
.search svg{width:11px;height:11px}
.filter-ic{width:14px;height:16px;margin-left:5px}
.mini-sep{width:1px;height:27px;background:#ddd;margin-left:6px}
.grid-ic{width:13px;height:10px;margin-left:6px}
.caret-dark{margin-left:8px;width:0;height:0;border:4px solid transparent;border-top:4.500px solid #666;border-bottom:0}
.tables{height:36px;line-height:40px;padding-left:22px;font-size:18.500px;font-weight:700;color:#111;flex:none}
.fields{flex:1;display:flex;min-height:0}
.field-list{width:240px}
.field-list li{height:26px;display:flex;align-items:center;padding-left:25px;color:#333;font-size:16px;white-space:nowrap}
.field-list li span{margin-left:12px}
.field-list li.rule{position:relative}
.field-list li.rule::after{content:"";position:absolute;left:18px;right:0;bottom:-1px;height:1px;background:#ddd}
.field-list li.rule+li{margin-top:1px}
.hs{width:12px;height:12px;margin-left:1px}
.gl{width:13px;height:13px}
.abc{font-style:normal;font-size:10px;color:#4c7f9e;width:13px;margin-left:-1px}
.it{font-style:italic;color:#222}
.track{background:#f3f3f3;width:20px;flex:none}
.data-track{padding:21px 7px 0}
.thumb{background:#888;width:6px}
.data-thumb{height:382px}

.cards{width:194px;margin-left:7px;display:flex;flex-direction:column;flex:none}
.card{background:#fafafa;border:1px solid #d6d6d6;padding:0 7px;flex:none}
.card h3{font-size:15px;color:#555;line-height:20px;margin-top:7px}
.pages{height:69px}
.filters{height:91px;margin-top:8px}
.filters .pill{margin-top:9px;width:182px;margin-left:-2px}
.marks{height:288px;margin-top:7px}
.pill{height:24px;border-radius:12px;color:#fff;font-size:16px;display:flex;align-items:center;padding-left:14px;white-space:nowrap}
.blue{background:#4996b2}
.green{background:#00b180;width:178px;font-size:16.500px;padding-left:12px}
.marktype{height:24px;width:178px;margin-top:14px;border:1px solid #d2d2d2;border-radius:2px;background:#fdfdfd;display:flex;align-items:center;padding-left:13px;font-size:13.500px;color:#555}
.marktype svg{width:10px;height:10px}
.marktype span{margin-left:7px}
.marktype b{margin-left:auto;width:22px;height:100%;border-left:1px solid #d2d2d2;position:relative}
.marktype b::after{content:"";position:absolute;left:6px;top:9px;border:4px solid transparent;border-top:4px solid #555;border-bottom:0}
.markgrid{display:grid;grid-template-columns:54px 56px 54px;column-gap:7px;row-gap:7px;margin-top:9px;width:178px}
.mbtn{height:52px;border:1px solid #d6d6d6;display:flex;flex-direction:column;align-items:center;padding-top:7px;font-size:13.500px;color:#333}
.mbtn svg{width:18px;height:17px}
.mbtn span{margin-top:6px}
.encode{display:flex;align-items:center;height:24px;margin-top:3px;width:178px}
.markgrid+.encode{margin-top:7px}
.enc-ic{width:15px;height:15px;margin-left:10px}
.enc{flex:none;width:142px;margin-left:6px}

.center{width:1045.500px;margin-left:6px;display:flex;flex-direction:column;flex:none}
.shelf{height:31px;background:#fafafa;border:1px solid #d6d6d6;display:flex;align-items:center;margin-bottom:7px;flex:none}
.shelf+.shelf{margin-bottom:8px}
.shelf-label{width:160px;height:100%;display:flex;align-items:center;padding-left:8px;border-right:1px solid #d6d6d6;font-size:15px;color:#555}
.shelf-label svg{width:11px;height:11px}
.shelf-label span{margin-left:8px}
.shelf .pill{margin-left:1px}
.viz-row{height:768px;display:flex;gap:6px;flex:none}
.sheet{width:845.500px;background:#fff;border:1px solid #d6d6d6;padding:0 6px;display:flex;flex-direction:column;flex:none}
.sheet-title{height:50px;line-height:56px;font-size:27px;font-weight:300;color:#444;padding-left:5px;flex:none}
.map{position:relative;width:831px;height:710px;flex:none;background:#fff;overflow:hidden}
.map-base,.map-over{width:831px;height:710px}
.map-over{position:absolute;left:0;top:0}
.land{fill:#eeeeee}
.sea{fill:#fff}
.halo path{fill:none;stroke:#f8f8f8;stroke-width:5px;vector-effect:non-scaling-stroke;stroke-linejoin:round}
.river path{fill:none;stroke:#fbfbfb;stroke-width:1.200px;vector-effect:non-scaling-stroke}
.bd path{fill:none;stroke:#9a9a9a;stroke-width:.8px;vector-effect:non-scaling-stroke;stroke-linejoin:round}
.lbl text{font-family:"Open Sans",Lato,sans-serif;font-size:11.500px;fill:#a3a3a3;text-anchor:middle}
.lbl text.big{font-size:16.500px;fill:#8f8f8f}
.lbl text.huge{font-size:20px;fill:#8a8a8a}
.mk circle{stroke:#f4f4f4;stroke-opacity:.6;stroke-width:1}
.attrib{position:absolute;left:3px;bottom:0;height:19px;width:207px;display:flex;align-items:center;padding-left:3px;background:#fafafa;font-family:"Liberation Sans",Arial,sans-serif;font-size:13px;color:#555;white-space:nowrap}
.unknown{position:absolute;left:697px;top:680px;width:129px;height:25px;background:#b3b3b3;border-radius:2px;color:#fff;font-weight:700;font-size:16px;display:flex;align-items:center;justify-content:center}

.legend{width:193.500px;background:#fafafa;border:1px solid #d6d6d6;display:flex;flex-direction:column;flex:none;overflow:hidden}
.legend h3{height:33px;line-height:33px;padding-left:7px;font-size:15px;color:#555;flex:none}
.legend-body{flex:1;display:flex;min-height:0;background:#fff}
.legend-list{width:170px;padding-left:3px;overflow:hidden}
.legend-list li{height:21px;display:flex;align-items:center;white-space:nowrap;font-size:15.700px;color:#555}
.legend-list i{width:14px;height:14px;margin-right:6px;flex:none}
.legend-track{padding:21px 7px 0}
.legend-thumb{height:48px}
.c1{background:#4e79a7}.c2{background:#a0cbe8}.c3{background:#f28e2b}.c4{background:#ffbe7d}.c5{background:#59a14f}.c6{background:#8cd17d}.c7{background:#b6992d}.c8{background:#f1ce63}.c9{background:#499894}.c10{background:#86bcb6}.c11{background:#e15759}.c12{background:#ff9d9a}.c13{background:#79706e}.c14{background:#bab0ac}.c15{background:#d37295}.c16{background:#fabfd2}.c17{background:#b07aa1}.c18{background:#d4a6c8}.c19{background:#9d7660}.c20{background:#d7b5a6}

.guide{margin-left:6.500px;width:400px;background:#fff;border-left:1px solid #d6d6d6;display:flex;flex-direction:column;flex:none}
.guide-head{height:31px;background:#fafafa;border-top:1px solid #d6d6d6;border-bottom:1px solid #d6d6d6;display:flex;align-items:center;padding:0 6px 0 22px;font-weight:700;font-size:18px;color:#111;justify-content:space-between;flex:none}
.guide-head svg{width:9px;height:9px}
.guide-sheet{height:59px;display:flex;align-items:center;padding-left:21px;border-bottom:1px solid #ececec;font-size:18px;color:#555;font-weight:700;flex:none}
.guide-sheet svg{width:16px;height:16px;margin-right:11px}
.gsec{border-bottom:1px solid #ececec;padding:0 21px;flex:none}
.gsec.viz{height:239px}
.gsec.short{height:56px}
.gsec.dataviz{height:177px}
.gsec.last{border:0}
.ghead{height:56px;display:flex;align-items:center;justify-content:space-between;font-weight:700;font-size:18.500px;color:#4a4a4a}
.ghead svg{width:15px;height:15px;margin-right:-4px}
.glabel{display:block;font-size:16px;color:#555;line-height:20px}
.glabel.vd{margin-top:12px}
.gtext{position:relative;margin-top:4px;width:359px;height:49px;border:1px solid #d2d2d2;border-radius:2px;padding:5px 6px;font-size:16px;line-height:18px;color:#888}
.gtext svg{position:absolute;right:1px;bottom:1px;width:9px;height:9px}
.glabel.ar{margin-top:18px}
.addlink{display:flex;align-items:center;margin-top:12px;color:#666;font-size:16px}
.addlink svg{width:15px;height:15px}
.addlink span{margin-left:14px}
.dsrc{display:flex;align-items:center;margin:0 0 0 7px;height:48px;font-size:18.500px;color:#666}
.dsrc svg{width:12px;height:8px;margin-right:15px}
.dfield{display:flex;align-items:center;margin:17px 0 0 40px;height:24px;font-size:16px;color:#666}
.dfield svg{width:15px;height:15px;margin-right:13px}

.tabbar{height:37px;background:#e6e6e6;border-top:1px solid #d4d4d4;border-bottom:1px solid #d4d4d4;display:flex;align-items:stretch;flex:none;font-size:15.500px;color:#666}
.tab{display:flex;align-items:center}
.tab.ds{width:162px;padding-left:10px;gap:5px;font-size:16px}
.tab.ds svg{width:9px;height:12px}
.tab.cur{width:69px;background:#f9f9f9;justify-content:center;font-weight:700;color:#555;border-left:1px solid #d4d4d4;border-right:1px solid #d4d4d4}
.tab.s2{width:70px;justify-content:center;border-right:1px solid #d4d4d4}
.tab.ict{width:32.300px;justify-content:center;border-right:1px solid #d4d4d4}
.tab.ict svg{width:16px;height:16px}

.statusbar{height:26px;background:#e9e9e9;border-bottom:1px solid #b8bcc4;display:flex;align-items:center;font-size:13px;color:#333;flex:none}
.st.a{margin-left:3px}
.st.b{margin-left:20px}
.st-cells{margin-left:auto;display:flex;align-items:stretch;height:25px}
.cell{display:block;border-left:1px solid #cfcfcf}
.c-a{width:158px}.c-b{width:31px}.c-c{width:32px}.c-d{width:58px}
.st-nav{width:70px;border-left:1px solid #cfcfcf;display:flex;align-items:center;justify-content:center}
.st-nav svg{width:60px;height:10px}
.st-view{width:70px;border-left:1px solid #cfcfcf;display:flex;align-items:center;gap:11px;padding-left:9px}
.st-view svg{width:11px;height:11px}

.taskbar{height:60px;background:linear-gradient(90deg,#dcebf8 0%,#dbe7f7 25%,#d4dff4 50%,#d6e0f4 72%,#e1edf9 88%,#e3eef9 100%);display:flex;align-items:center;flex:none;color:#1b1b1b}
.weather{width:502px;padding-left:27px;display:flex;align-items:center;flex:none}
.weather svg{width:28px;height:26px}
.w-text{margin-left:9px;font-family:"Open Sans",sans-serif;font-size:14px;line-height:20px;color:#222}
.w2{color:#444}
.win{width:29px;height:29px}
.tsearch{margin-left:18px;width:273px;height:38px;border-radius:19px;background:linear-gradient(90deg,#f9fbff,#edf2fc);border:1px solid #c9d2e4;display:flex;align-items:center;padding-left:13px;font-family:"Open Sans",sans-serif;font-size:16px;color:#444;flex:none}
.tsearch svg{width:18px;height:18px}
.tsearch span{margin-left:13px}
.apps{margin-left:16px;display:flex;align-items:center;gap:25px;flex:none;height:60px}
.apps>svg{width:30px;height:30px}
.apps>svg.mcafee{width:28px}
.app-files{width:32px;position:relative;flex:none;margin-left:-1px}
.app-files svg{width:32px;height:26px}
.app-files::after{content:"";position:absolute;left:13px;top:35px;width:7px;height:4px;border-radius:2px;background:#6b7280}
.myhp{font-family:"Open Sans",sans-serif;font-style:italic;font-size:11px;fill:#fff;text-anchor:middle}
.hp{font-weight:700;font-size:13px}
.helpq{font-family:"Open Sans",sans-serif;font-weight:700;font-size:20px;fill:#fff;text-anchor:middle}
.app-open{width:28px;position:relative;flex:none}
.app-open svg{width:28px;height:26px;filter:drop-shadow(0 1px 2px rgba(70,80,100,.5))}
.app-open::after{content:"";position:absolute;left:10px;top:35px;width:7px;height:4px;border-radius:2px;background:#6b7280}
.app-active{width:48px;height:48px;margin-left:-8px;background:#edf0fa;border-radius:5px;position:relative;display:flex;justify-content:center;align-items:center;flex:none}
.app-active svg{width:28px;height:26px;filter:drop-shadow(0 1px 1px rgba(70,80,100,.4))}
.app-active::after{content:"";position:absolute;left:14px;bottom:1px;width:20px;height:4px;border-radius:2px;background:#0c7ad6}
.tray{margin-left:auto;display:flex;align-items:center;padding-right:25px;font-family:"Open Sans",sans-serif;font-size:14px;color:#222}
.t-chev{width:13px;height:7px}
.t-cloud{width:20px;height:16px;margin-left:23px}
.t-sync{width:21px;height:21px;margin-left:20px}
.lang{margin-left:22px;width:32px;text-align:center;line-height:21px}
.t-wifi{width:20px;height:16px;margin-left:20px}
.t-vol{width:20px;height:16px;margin-left:10px}
.t-bat{width:20px;height:12px;margin-left:10px}
.clock{margin-left:10px;width:88px;text-align:right;line-height:20px}
.notif{width:20px;height:20px;margin-left:9px;border-radius:50%;background:#0c72d4;color:#fff;font-size:12px;display:flex;align-items:center;justify-content:center;flex:none}
```
